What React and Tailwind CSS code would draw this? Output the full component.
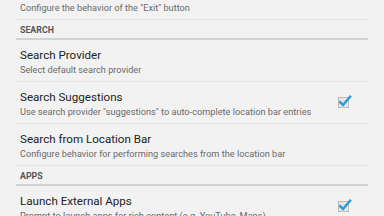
import React from 'react';

const Check = () => (
  <svg width="16" height="16" viewBox="0 0 16 16" className="shrink-0">
    <rect x="2.5" y="3.5" width="10" height="10" fill="#e6e6e6" stroke="#bdbdbd" strokeWidth="1" />
    <path d="M4.2 8.2 L7 11 L14.2 2.6" fill="none" stroke="#2b9ad4" strokeWidth="2.4" strokeLinecap="square" />
  </svg>
);

function Pref({ title, summary, checked }) {
  return (
    <div className="px-4">
      <div className="border-b border-[#e4e4e4] h-[42px] flex items-center pl-1 pr-4">
        <div className="flex-1 min-w-0 flex flex-col pt-[2px]">
          <div className="text-[11.6px] leading-[15px] text-[#222222] whitespace-nowrap">{title}</div>
          <div className="text-[9.2px] leading-[13px] text-[#6b6b6b] whitespace-nowrap">{summary}</div>
        </div>
        {checked && <div className="ml-2 mb-[2px]"><Check /></div>}
      </div>
    </div>
  );
}

function Header({ label }) {
  return (
    <div className="px-4">
      <div className="h-[18px] flex items-end pl-1 pb-[3px] text-[8.8px] font-bold text-[#555555] leading-none">{label}</div>
      <div className="h-[2px] bg-[#d2d2d2]" />
    </div>
  );
}

export default function App() {
  return (
    <div className="h-[216px] w-[384px] overflow-hidden bg-[#f2f2f2]" style={{ fontFamily: 'Roboto, "Noto Sans", sans-serif' }}>
      <div className="-mt-[22px]">
        <Pref title="Exit" summary={'Configure the behavior of the "Exit" button'} />
        <Header label="SEARCH" />
        <Pref title="Search Provider" summary="Select default search provider" />
        <Pref title="Search Suggestions" summary={'Use search provider "suggestions" to auto-complete location bar entries'} checked />
        <Pref title="Search from Location Bar" summary="Configure behavior for performing searches from the location bar" />
        <Header label="APPS" />
        <Pref title="Launch External Apps" summary="Prompt to launch apps for rich content (e.g. YouTube, Maps)" checked />
      </div>
    </div>
  );
}
